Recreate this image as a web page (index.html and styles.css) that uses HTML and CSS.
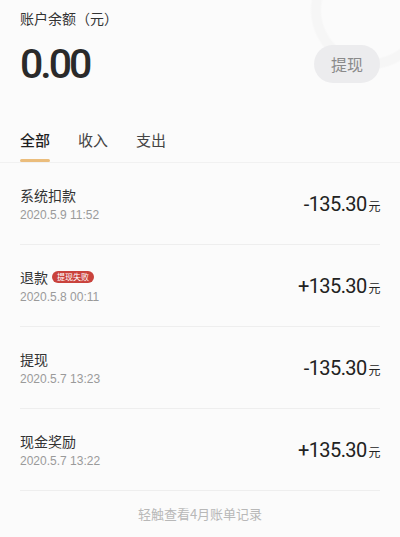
FILE: index.html
```html
<!DOCTYPE html>
<html lang="zh-CN">
  <head>
    <meta charset="UTF-8" />
    <meta name="viewport" content="width=device-width, initial-scale=1.0" />
    <title>账户余额</title>
    <link rel="stylesheet" href="styles.css">
  </head>
  <body>
    <header class="header">
      <div class="label">账户余额（元）</div>
      <div class="balance-row">
        <span class="balance">0.00</span>
        <button type="button" class="withdraw">提现</button>
      </div>
    </header>

    <nav class="tabs">
      <a class="tab active" href="#">全部</a>
      <a class="tab" href="#">收入</a>
      <a class="tab" href="#">支出</a>
    </nav>

    <ul class="list">
      <li class="item">
        <div class="info">
          <div class="title">系统扣款</div>
          <div class="date">2020.5.9 11:52</div>
        </div>
        <div class="amount">-135.30<small>元</small></div>
      </li>
      <li class="item">
        <div class="info">
          <div class="title">退款<span class="badge">提现失败</span></div>
          <div class="date">2020.5.8 00:11</div>
        </div>
        <div class="amount">+135.30<small>元</small></div>
      </li>
      <li class="item">
        <div class="info">
          <div class="title">提现</div>
          <div class="date">2020.5.7 13:23</div>
        </div>
        <div class="amount">-135.30<small>元</small></div>
      </li>
      <li class="item">
        <div class="info">
          <div class="title">现金奖励</div>
          <div class="date">2020.5.7 13:22</div>
        </div>
        <div class="amount">+135.30<small>元</small></div>
      </li>
    </ul>

    <div class="more">轻触查看4月账单记录</div>
  </body>
</html>
```

FILE: styles.css
```css
body {
  margin: 0;
  background-color: #fbfbfb;
  font-family: "Noto Sans CJK SC", "Noto Sans", sans-serif;
  color: #333;
}
.header {
  padding: 8px 20px 0;
  background: radial-gradient(circle at 370px 10px, #fbfbfb 48px, #f6f6f6 50px, #f6f6f6 58px, #fbfbfb 60px);
}
.label {
  font-size: 14px;
  line-height: 20px;
  color: #333;
}
.balance-row {
  display: flex;
  justify-content: space-between;
  align-items: center;
  margin-top: 16px;
  height: 40px;
}
.balance {
  font-family: Roboto, "Liberation Sans", sans-serif;
  font-size: 41px;
  font-weight: 500;
  letter-spacing: -3px;
  color: #2a2a2a;
  line-height: 40px;
}
.withdraw {
  width: 66px;
  height: 38px;
  border: none;
  border-radius: 19px;
  background-color: #ececee;
  color: #8a8a8a;
  font-family: "Noto Sans CJK SC", sans-serif;
  font-size: 16px;
  padding: 0;
}
.tabs {
  display: flex;
  gap: 28px;
  margin-top: 32px;
  padding: 0 20px;
  border-bottom: 1px solid #f1f1f1;
}
.tab {
  display: flex;
  flex-direction: column;
  align-items: center;
  padding-top: 13px;
  font-size: 15px;
  line-height: 22px;
  color: #444;
  text-decoration: none;
}
.tab::after {
  content: "";
  display: block;
  width: 100%;
  height: 3px;
  margin-top: 8px;
  border-radius: 2px;
}
.tab.active {
  color: #1f1f1f;
  font-weight: 500;
}
.tab.active::after {
  background-color: #ebbd7c;
}
.list {
  list-style: none;
  margin: 0;
  padding: 0 20px;
}
.item {
  display: flex;
  justify-content: space-between;
  align-items: center;
  height: 81px;
  border-bottom: 1px solid #eeeeee;
}
.title {
  display: flex;
  align-items: center;
  font-size: 14px;
  line-height: 20px;
  color: #333;
}
.badge {
  margin-left: 4px;
  padding: 0 5px;
  height: 12px;
  line-height: 12px;
  border-radius: 6px;
  background-color: #c9423c;
  color: #fff;
  font-size: 8px;
}
.date {
  margin-top: 2px;
  font-family: "Liberation Sans", Arial, sans-serif;
  font-size: 12px;
  line-height: 16px;
  color: #9a9a9a;
}
.amount {
  font-family: Roboto, "Liberation Sans", sans-serif;
  font-size: 20px;
  font-weight: 400;
  letter-spacing: -0.6px;
  color: #222;
}
.amount small {
  font-family: "Noto Sans CJK SC", sans-serif;
  font-size: 12px;
  font-weight: 400;
  margin-left: 2px;
}
.more {
  text-align: center;
  font-size: 13px;
  line-height: 46px;
  color: #b8b8b8;
}
```
